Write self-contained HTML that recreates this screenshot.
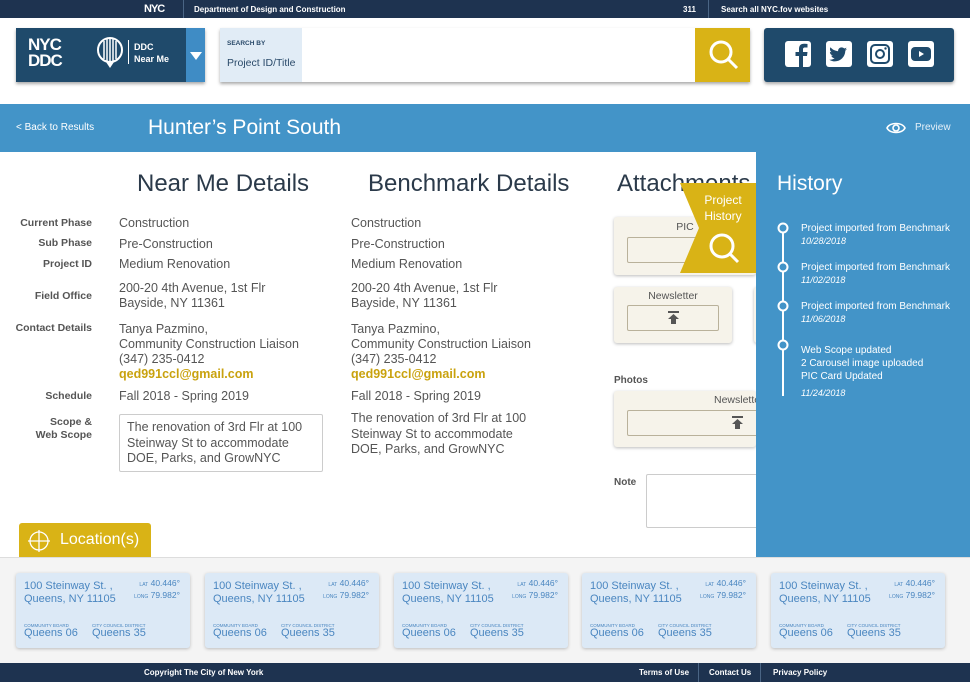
<!DOCTYPE html>
<html><head><meta charset="utf-8"><style>
*{box-sizing:border-box;margin:0;padding:0}
body{width:970px;height:682px;overflow:hidden;position:relative;background:#fff;font-family:"Liberation Sans",sans-serif;color:#444}
.a{position:absolute}
.top{left:0;top:0;width:970px;height:18px;background:#1e3350;color:#fff;font-size:8px;font-weight:bold}
.lbl{position:absolute;right:878px;font-size:10.5px;font-weight:bold;color:#555;text-align:right;line-height:13px}
.v{position:absolute;font-size:12.5px;color:#555;line-height:15px}
.em{color:#c9a20e;font-weight:bold}
h2{position:absolute;font-weight:normal;font-size:24px;color:#2b3a4a;top:170px}
.card{position:absolute;background:#f6f3ea;border-radius:3px;box-shadow:0 1px 3px #bbb;font-size:10.5px;color:#555;text-align:center}
.up{position:absolute;border:1.5px solid #b9b19a;border-radius:2px;background:#f6f3ea}
.loc{position:absolute;top:573px;width:174px;height:75px;background:#dce9f6;border-radius:3px;box-shadow:0 1px 3px #bbb;color:#4a86c0}
.hi{position:absolute;left:801px;font-size:10px;color:#fff;line-height:13px}
.hi i{font-size:9px}
</style></head><body>
<div class="a top">
 <span class="a" style="left:144px;top:3px;font-size:11px;font-weight:900;letter-spacing:-1px">NYC</span>
 <div class="a" style="left:183px;top:0;width:1px;height:18px;background:#4a6585"></div>
 <span class="a" style="left:194px;top:5px">Department of Design and Construction</span>
 <span class="a" style="left:683px;top:5px">311</span>
 <div class="a" style="left:708px;top:0;width:1px;height:18px;background:#4a6585"></div>
 <span class="a" style="left:721px;top:5px">Search all NYC.fov websites</span>
</div>
<div class="a" style="left:16px;top:28px;width:189px;height:54px;background:#1f4a6b;box-shadow:0 2px 3px #aaa">
 <div class="a" style="left:12px;top:9px;color:#fff;font-weight:900;font-size:17px;line-height:16px;letter-spacing:-1px">NYC<br>DDC</div>
 <svg class="a" style="left:80px;top:8px" width="28" height="34" viewBox="0 0 28 34"><ellipse cx="14" cy="14" rx="12" ry="12" fill="none" stroke="#fff" stroke-width="2"/><path d="M8 5v18M11 3v22M14 2v24M17 3v22M20 5v18" stroke="#fff" stroke-width="1.5"/><path d="M10 26l4 6 4-6" fill="#fff"/></svg>
 <div class="a" style="left:112px;top:12px;width:1px;height:24px;background:#fff"></div>
 <div class="a" style="left:118px;top:13px;color:#fff;font-size:9px;font-weight:bold;line-height:12px">DDC<br>Near Me</div>
 <div class="a" style="left:170px;top:0;width:19px;height:54px;background:#3f8cc5"></div>
 <div class="a" style="left:174px;top:24px;border-left:6px solid transparent;border-right:6px solid transparent;border-top:8px solid #fff"></div>
</div>
<div class="a" style="left:220px;top:28px;width:530px;height:54px;background:#fff;box-shadow:0 2px 3px #aaa">
 <div class="a" style="left:0;top:0;width:82px;height:54px;background:#e1ecf6"></div>
 <div class="a" style="left:7px;top:12px;font-size:6.5px;font-weight:bold;color:#2a4a6a">SEARCH BY</div>
 <div class="a" style="left:7px;top:29px;font-size:10.5px;color:#2a4a6a">Project ID/Title</div>
 <div class="a" style="left:475px;top:0;width:55px;height:54px;background:#d9b316"></div>
 <svg class="a" style="left:486px;top:10px" width="34" height="34" viewBox="0 0 34 34"><circle cx="15" cy="14" r="10" fill="none" stroke="#fff" stroke-width="3"/><path d="M22 21l9 9" stroke="#fff" stroke-width="3"/></svg>
</div>
<div class="a" style="left:764px;top:28px;width:190px;height:54px;background:#1f4a6b;border-radius:3px;box-shadow:0 2px 3px #aaa">
 <svg class="a" style="left:21px;top:13px" width="156" height="27" viewBox="0 0 156 27">
  <rect x="0" y="0" width="26" height="26" rx="3" fill="#fff"/><path d="M18 26V15h4l.5-4H18V8.5c0-1.2.4-2 2-2h2.5V3c-.5 0-2-.2-3.5-.2-3.4 0-5 2-5 5.3V11h-3.5v4H14v11z" fill="#1f4a6b"/>
  <rect x="41" y="0" width="26" height="26" rx="3" fill="#fff"/><path d="M62 8c-.7.3-1.4.5-2.1.6.8-.5 1.3-1.2 1.6-2-.7.4-1.5.7-2.3.9-1.4-1.5-3.8-1.5-5.2 0-.7.7-1 1.7-.9 2.7-3-.2-5.7-1.6-7.6-3.9-1 1.7-.5 3.9 1.1 5-.6 0-1.2-.2-1.7-.4 0 1.8 1.3 3.3 3 3.6-.5.2-1.1.2-1.7.1.5 1.5 1.9 2.5 3.4 2.5-1.5 1.2-3.4 1.8-5.3 1.6 7 4.5 16-.5 16-9.3V9.8C60.7 9.3 61.4 8.7 62 8z" fill="#1f4a6b"/>
  <rect x="82" y="0" width="26" height="26" rx="3" fill="#fff"/><rect x="86" y="4" width="18" height="18" rx="4" fill="none" stroke="#1f4a6b" stroke-width="2"/><circle cx="95" cy="13" r="4" fill="none" stroke="#1f4a6b" stroke-width="2"/><circle cx="100.5" cy="7.5" r="1.2" fill="#1f4a6b"/>
  <rect x="123" y="0" width="26" height="26" rx="3" fill="#fff"/><rect x="126" y="6" width="20" height="14" rx="4" fill="#1f4a6b"/><path d="M134 10v6l5-3z" fill="#fff"/>
 </svg>
</div>
<div class="a" style="left:0;top:104px;width:970px;height:48px;background:#4394c8;color:#fff">
 <div class="a" style="left:16px;top:18px;font-size:10px">&lt; Back to Results</div>
 <div class="a" style="left:148px;top:12px;font-size:21px">Hunter’s Point South</div>
 <svg class="a" style="left:886px;top:17px" width="20" height="14" viewBox="0 0 20 14"><path d="M1 7C4 1 16 1 19 7 16 13 4 13 1 7z" fill="none" stroke="#fff" stroke-width="1.6"/><circle cx="10" cy="7" r="3" fill="none" stroke="#fff" stroke-width="1.6"/></svg>
 <div class="a" style="left:915px;top:18px;font-size:10px;color:#e6f0f8">Preview</div>
</div>
<h2 style="left:137px">Near Me Details</h2>
<h2 style="left:368px">Benchmark Details</h2>
<h2 style="left:617px">Attachments</h2>
<div class="lbl" style="top:217px">Current Phase</div>
<div class="lbl" style="top:237px">Sub Phase</div>
<div class="lbl" style="top:258px">Project ID</div>
<div class="lbl" style="top:290px">Field Office</div>
<div class="lbl" style="top:322px">Contact Details</div>
<div class="lbl" style="top:390px">Schedule</div>
<div class="lbl" style="top:416px">Scope &amp;<br>Web Scope</div>
<div class="v" style="left:119px;top:216px">Construction</div>
<div class="v" style="left:119px;top:237px">Pre-Construction</div>
<div class="v" style="left:119px;top:257px">Medium Renovation</div>
<div class="v" style="left:119px;top:281px">200-20 4th Avenue, 1st Flr<br>Bayside, NY 11361</div>
<div class="v" style="left:119px;top:322px">Tanya Pazmino,<br>Community Construction Liaison<br>(347) 235-0412<br><span class="em">qed991ccl@gmail.com</span></div>
<div class="v" style="left:119px;top:389px">Fall 2018 - Spring 2019</div>
<div class="a" style="left:119px;top:414px;width:204px;height:58px;border:1px solid #ccc;border-radius:2px;padding:5px 7px;font-size:12.5px;line-height:15.5px;color:#555">The renovation of 3rd Flr at 100 Steinway St to accommodate DOE, Parks, and GrowNYC</div>
<div class="v" style="left:351px;top:216px">Construction</div>
<div class="v" style="left:351px;top:237px">Pre-Construction</div>
<div class="v" style="left:351px;top:257px">Medium Renovation</div>
<div class="v" style="left:351px;top:281px">200-20 4th Avenue, 1st Flr<br>Bayside, NY 11361</div>
<div class="v" style="left:351px;top:322px">Tanya Pazmino,<br>Community Construction Liaison<br>(347) 235-0412<br><span class="em">qed991ccl@gmail.com</span></div>
<div class="v" style="left:351px;top:389px">Fall 2018 - Spring 2019</div>
<div class="v" style="left:351px;top:411px;line-height:15.5px">The renovation of 3rd Flr at 100<br>Steinway St to accommodate<br>DOE, Parks, and GrowNYC</div>
<div class="card" style="left:614px;top:217px;width:142px;height:58px"><div style="margin-top:4px">PIC</div><div class="up" style="left:13px;top:20px;width:92px;height:26px"></div></div>
<div class="card" style="left:614px;top:287px;width:118px;height:56px"><div style="margin-top:3px">Newsletter</div><div class="up" style="left:13px;top:18px;width:92px;height:26px"><svg class="a" style="left:40px;top:5px" width="11" height="13"><path d="M0 1h11" stroke="#555" stroke-width="2"/><path d="M5.5 3L0 8h3v5h5V8h3z" fill="#555"/></svg></div></div>
<div class="card" style="left:754px;top:287px;width:10px;height:56px"></div>
<div class="a" style="left:614px;top:375px;font-size:10px;font-weight:bold;color:#555">Photos</div>
<div class="card" style="left:614px;top:391px;width:142px;height:56px"><div style="margin-top:3px;margin-left:100px;text-align:left">Newsletter</div><div class="up" style="left:13px;top:19px;width:140px;height:26px"><svg class="a" style="left:104px;top:5px" width="11" height="13"><path d="M0 1h11" stroke="#555" stroke-width="2"/><path d="M5.5 3L0 8h3v5h5V8h3z" fill="#555"/></svg></div></div>
<div class="a" style="left:614px;top:477px;font-size:10px;font-weight:bold;color:#555">Note</div>
<div class="a" style="left:646px;top:474px;width:120px;height:54px;border:1px solid #ccc;border-radius:2px"></div>
<div class="a" style="left:756px;top:152px;width:214px;height:405px;background:#4394c8">
 <div class="a" style="left:21px;top:20px;font-size:21px;color:#fff">History</div>
 <div class="a" style="left:26px;top:74px;width:2px;height:170px;background:#fff"></div>
</div>
<svg class="a" style="left:776px;top:220px" width="16" height="140"><circle cx="7" cy="8" r="4.5" fill="#4394c8" stroke="#fff" stroke-width="2"/><circle cx="7" cy="47" r="4.5" fill="#4394c8" stroke="#fff" stroke-width="2"/><circle cx="7" cy="86" r="4.5" fill="#4394c8" stroke="#fff" stroke-width="2"/><circle cx="7" cy="125" r="4.5" fill="#4394c8" stroke="#fff" stroke-width="2"/></svg>
<div class="hi" style="top:222px">Project imported from Benchmark<br><i>10/28/2018</i></div>
<div class="hi" style="top:261px">Project imported from Benchmark<br><i>11/02/2018</i></div>
<div class="hi" style="top:300px">Project imported from Benchmark<br><i>11/06/2018</i></div>
<div class="hi" style="top:344px">Web Scope updated<br>2 Carousel image uploaded<br>PIC Card Updated<br><i style="line-height:20px">11/24/2018</i></div>
<svg class="a" style="left:679px;top:183px" width="78" height="90"><path d="M1 0H77V90H1L20 45z" fill="#d9b316"/><circle cx="43" cy="63" r="11" fill="none" stroke="#fff" stroke-width="3"/><path d="M51 71l8 8" stroke="#fff" stroke-width="3"/><text x="44" y="21" fill="#fff" font-size="12" text-anchor="middle" font-family="Liberation Sans">Project</text><text x="44" y="37" fill="#fff" font-size="12" text-anchor="middle" font-family="Liberation Sans">History</text></svg>
<div class="a" style="left:19px;top:523px;width:132px;height:35px;background:#d9b316;border-radius:3px 3px 0 0;color:#fff">
 <svg class="a" style="left:9px;top:7px" width="22" height="22"><circle cx="11" cy="11" r="9" fill="none" stroke="#fff" stroke-width="1.3"/><path d="M11 0v22M0 11h22" stroke="#fff" stroke-width="1.3"/></svg>
 <div class="a" style="left:41px;top:8px;font-size:16px">Location(s)</div>
</div>
<div class="a" style="left:0;top:557px;width:970px;height:106px;background:#f4f4f4;border-top:1px solid #ddd"></div>
<div class="loc" style="left:16px"><div class="a" style="left:8px;top:7px;font-size:11px;line-height:13px">100 Steinway St. ,<br>Queens, NY 11105</div><div class="a" style="right:10px;top:5px;font-size:8.5px;text-align:right;line-height:10px"><span style="font-size:5px">LAT</span> 40.446°<br><span style="font-size:5px">LONG</span> 79.982°</div><div class="a" style="left:8px;top:50px;font-size:4.5px">COMMUNITY BOARD</div><div class="a" style="left:8px;top:54px;font-size:11px">Queens 06</div><div class="a" style="left:76px;top:50px;font-size:4.5px">CITY COUNCIL DISTRICT</div><div class="a" style="left:76px;top:54px;font-size:11px">Queens 35</div></div>
<div class="loc" style="left:205px"><div class="a" style="left:8px;top:7px;font-size:11px;line-height:13px">100 Steinway St. ,<br>Queens, NY 11105</div><div class="a" style="right:10px;top:5px;font-size:8.5px;text-align:right;line-height:10px"><span style="font-size:5px">LAT</span> 40.446°<br><span style="font-size:5px">LONG</span> 79.982°</div><div class="a" style="left:8px;top:50px;font-size:4.5px">COMMUNITY BOARD</div><div class="a" style="left:8px;top:54px;font-size:11px">Queens 06</div><div class="a" style="left:76px;top:50px;font-size:4.5px">CITY COUNCIL DISTRICT</div><div class="a" style="left:76px;top:54px;font-size:11px">Queens 35</div></div>
<div class="loc" style="left:394px"><div class="a" style="left:8px;top:7px;font-size:11px;line-height:13px">100 Steinway St. ,<br>Queens, NY 11105</div><div class="a" style="right:10px;top:5px;font-size:8.5px;text-align:right;line-height:10px"><span style="font-size:5px">LAT</span> 40.446°<br><span style="font-size:5px">LONG</span> 79.982°</div><div class="a" style="left:8px;top:50px;font-size:4.5px">COMMUNITY BOARD</div><div class="a" style="left:8px;top:54px;font-size:11px">Queens 06</div><div class="a" style="left:76px;top:50px;font-size:4.5px">CITY COUNCIL DISTRICT</div><div class="a" style="left:76px;top:54px;font-size:11px">Queens 35</div></div>
<div class="loc" style="left:582px"><div class="a" style="left:8px;top:7px;font-size:11px;line-height:13px">100 Steinway St. ,<br>Queens, NY 11105</div><div class="a" style="right:10px;top:5px;font-size:8.5px;text-align:right;line-height:10px"><span style="font-size:5px">LAT</span> 40.446°<br><span style="font-size:5px">LONG</span> 79.982°</div><div class="a" style="left:8px;top:50px;font-size:4.5px">COMMUNITY BOARD</div><div class="a" style="left:8px;top:54px;font-size:11px">Queens 06</div><div class="a" style="left:76px;top:50px;font-size:4.5px">CITY COUNCIL DISTRICT</div><div class="a" style="left:76px;top:54px;font-size:11px">Queens 35</div></div>
<div class="loc" style="left:771px"><div class="a" style="left:8px;top:7px;font-size:11px;line-height:13px">100 Steinway St. ,<br>Queens, NY 11105</div><div class="a" style="right:10px;top:5px;font-size:8.5px;text-align:right;line-height:10px"><span style="font-size:5px">LAT</span> 40.446°<br><span style="font-size:5px">LONG</span> 79.982°</div><div class="a" style="left:8px;top:50px;font-size:4.5px">COMMUNITY BOARD</div><div class="a" style="left:8px;top:54px;font-size:11px">Queens 06</div><div class="a" style="left:76px;top:50px;font-size:4.5px">CITY COUNCIL DISTRICT</div><div class="a" style="left:76px;top:54px;font-size:11px">Queens 35</div></div>
<div class="a" style="left:0;top:663px;width:970px;height:19px;background:#1e3350;color:#fff;font-size:8px;font-weight:bold">
 <span class="a" style="left:144px;top:5px">Copyright The City of New York</span>
 <span class="a" style="left:639px;top:5px">Terms of Use</span>
 <div class="a" style="left:698px;top:0;width:1px;height:19px;background:#4a6585"></div>
 <span class="a" style="left:709px;top:5px">Contact Us</span>
 <div class="a" style="left:760px;top:0;width:1px;height:19px;background:#4a6585"></div>
 <span class="a" style="left:773px;top:5px">Privacy Policy</span>
</div>
</body></html>
